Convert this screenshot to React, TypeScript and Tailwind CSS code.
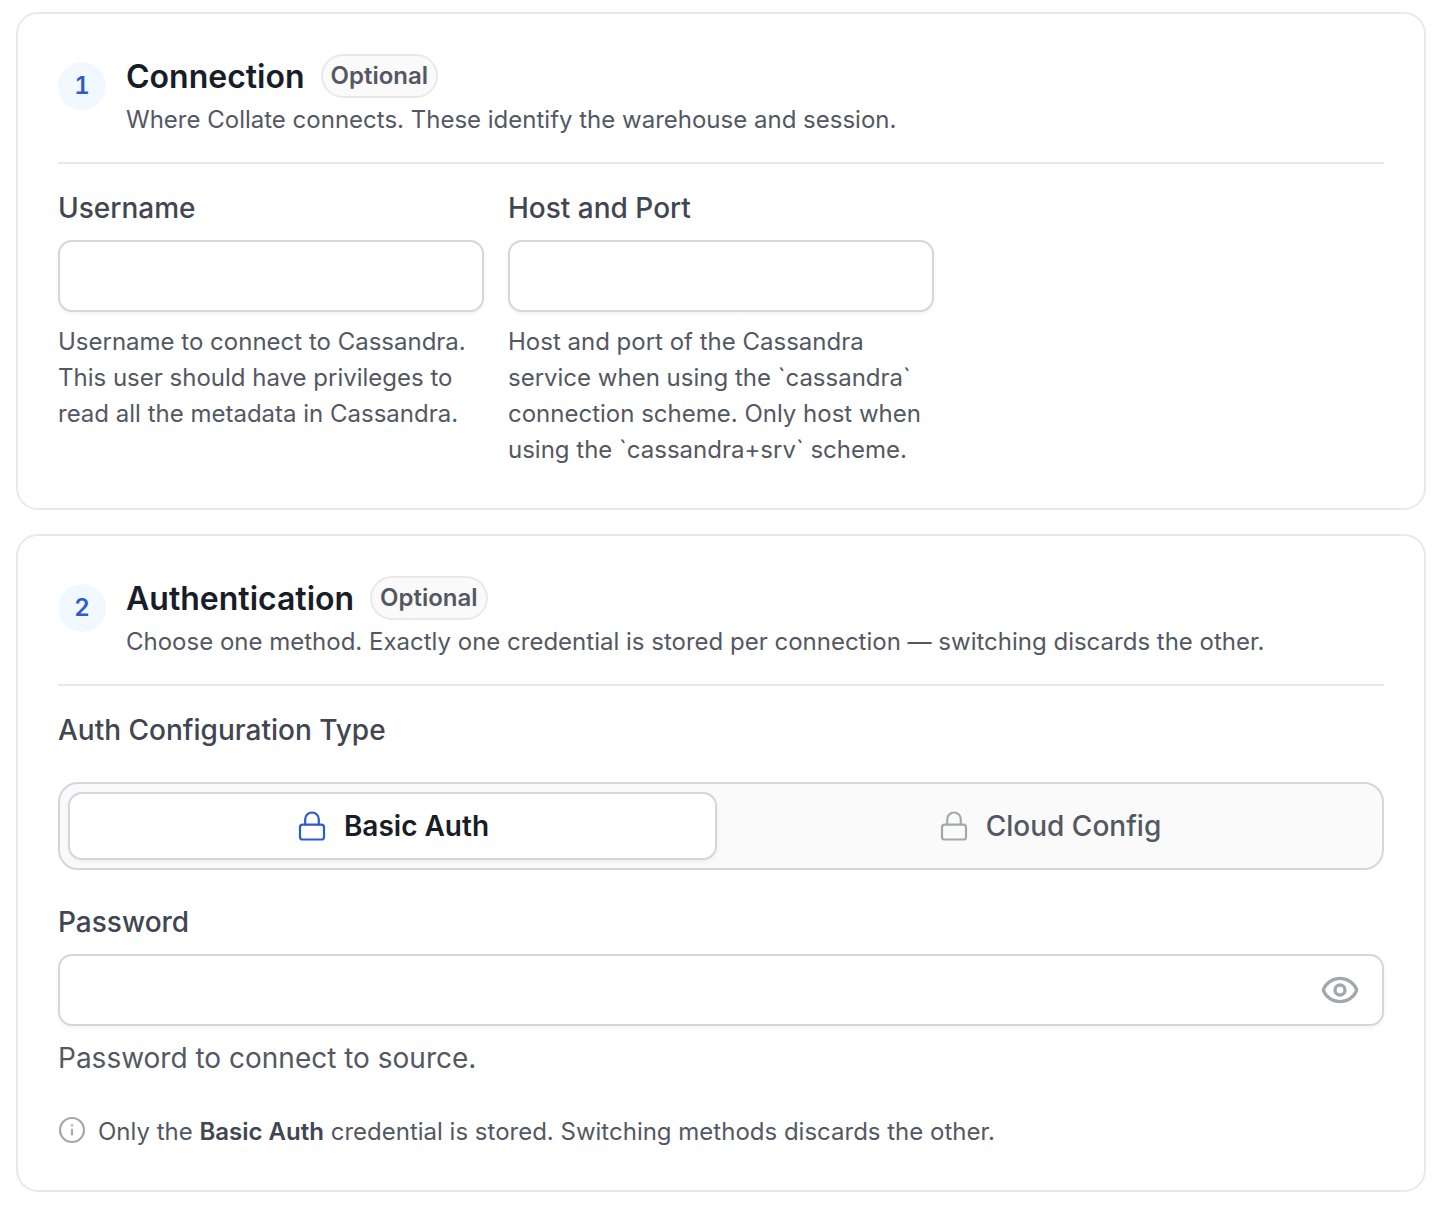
import { useState, type ReactNode } from "react";
import { Eye } from "lucide-react";

function LockIcon({ className }: { className: string }) {
  return (
    <svg
      className={className}
      width="32"
      height="32"
      viewBox="0 0 32 32"
      fill="none"
      stroke="currentColor"
      strokeWidth="2.2"
      strokeLinecap="round"
      strokeLinejoin="round"
      aria-hidden="true"
    >
      <rect x="4" y="14.7" width="24" height="14.8" rx="2.6" />
      <path d="M9.2 14.7V9.3a6.8 6.8 0 0 1 13.6 0v5.4" />
    </svg>
  );
}

function InfoIcon() {
  return (
    <svg
      className="mt-0.5 shrink-0 text-[#a4a7ae]"
      width="28"
      height="28"
      viewBox="0 0 28 28"
      fill="none"
      stroke="currentColor"
      strokeWidth="2.2"
      strokeLinecap="round"
      aria-hidden="true"
    >
      <circle cx="14" cy="14" r="12" />
      <path d="M14 18.6V13.8M14 9.3v.1" />
    </svg>
  );
}

type SectionProps = {
  step: number;
  title: string;
  description: string;
  children: ReactNode;
};

function Section({ step, title, description, children }: SectionProps) {
  return (
    <section className="rounded-[22px] border-2 border-[#e9e9eb] bg-white p-10">
      <header className="flex gap-5 border-b-2 border-[#e9e9eb] pb-6">
        <span className="mt-2 flex size-12 shrink-0 items-center justify-center rounded-full bg-[#f1f8ff] text-2xl font-semibold tabular-nums text-[#2e5acf]">
          {step}
        </span>
        <div>
          <div className="flex h-12 items-start gap-4">
            <h2 className="text-[32px] leading-[46px] font-semibold text-[#181d27]">{title}</h2>
            <span className="rounded-full border-2 border-[#e9e9eb] bg-[#fafafa] px-2 text-2xl leading-10 font-semibold text-[#535862]">
              Optional
            </span>
          </div>
          <p className="text-2xl leading-9 text-[#535862]">{description}</p>
        </div>
      </header>
      {children}
    </section>
  );
}

const inputStyle =
  "h-18 w-full rounded-[14px] border-2 border-[#d5d6db] bg-white px-6 text-[28px] text-[#181d27] shadow-[0_2px_4px_rgba(10,13,18,0.05)] outline-none focus:border-[#2e5acf]";
const labelStyle = "block text-[28px] leading-10 font-medium text-[#414651]";

function TextField({ id, label, help }: { id: string; label: string; help: string }) {
  return (
    <div>
      <label htmlFor={id} className={labelStyle}>
        {label}
      </label>
      <input id={id} type="text" className={`mt-3 block ${inputStyle}`} />
      <p className="mt-3 text-2xl leading-9 text-[#535862]">{help}</p>
    </div>
  );
}

const methods = ["Basic Auth", "Cloud Config"];

export default function App() {
  const [method, setMethod] = useState(methods[0]);
  const [visible, setVisible] = useState(false);

  return (
    <main className="flex flex-col gap-6 bg-white py-3 pr-[18px] pl-4 font-['Inter',sans-serif] [font-optical-sizing:none]">
      <Section
        step={1}
        title="Connection"
        description="Where Collate connects. These identify the warehouse and session."
      >
        <div className="mt-6 grid grid-cols-3 gap-6">
          <TextField
            id="username"
            label="Username"
            help="Username to connect to Cassandra. This user should have privileges to read all the metadata in Cassandra."
          />
          <TextField
            id="host-port"
            label="Host and Port"
            help="Host and port of the Cassandra service when using the `cassandra` connection scheme. Only host when using the `cassandra+srv` scheme."
          />
        </div>
      </Section>

      <Section
        step={2}
        title="Authentication"
        description="Choose one method. Exactly one credential is stored per connection — switching discards the other."
      >
        <h3 id="auth-type" className={`mt-6 ${labelStyle}`}>
          Auth Configuration Type
        </h3>
        <div
          role="group"
          aria-labelledby="auth-type"
          className="mt-8 grid grid-cols-2 gap-2 rounded-[20px] border-2 border-[#d5d6db] bg-[#fafafa] p-2"
        >
          {methods.map((name) => {
            const active = name === method;
            return (
              <button
                key={name}
                type="button"
                aria-pressed={active}
                onClick={() => setMethod(name)}
                className={`flex h-[68px] items-center justify-center gap-4 rounded-[14px] border-2 text-[28px] leading-10 ${
                  active
                    ? "border-[#d5d6db] bg-white font-semibold text-[#181d27] shadow-[0_2px_4px_rgba(10,13,18,0.05)]"
                    : "border-transparent font-medium text-[#535862]"
                }`}
              >
                <LockIcon className={active ? "text-[#2e5acf]" : "text-[#a4a7ae]"} />
                {name}
              </button>
            );
          })}
        </div>

        <label htmlFor="password" className={`mt-8 ${labelStyle}`}>
          Password
        </label>
        <div className="relative mt-3">
          <input
            id="password"
            type={visible ? "text" : "password"}
            className={`block pr-20 ${inputStyle}`}
          />
          <button
            type="button"
            aria-label="Show password"
            onClick={() => setVisible(!visible)}
            className="absolute inset-y-0 right-6 flex items-center text-[#a4a7ae]"
          >
            <Eye size={40} strokeWidth={2} />
          </button>
        </div>
        <p className="mt-3 text-[28px] leading-10 text-[#535862]">Password to connect to source.</p>

        <div className="mt-9 flex gap-3 text-2xl leading-9 text-[#535862]">
          <InfoIcon />
          <p>
            Only the <strong className="font-semibold text-[#414651]">Basic Auth</strong> credential
            is stored. Switching methods discards the other.
          </p>
        </div>
      </Section>
    </main>
  );
}
